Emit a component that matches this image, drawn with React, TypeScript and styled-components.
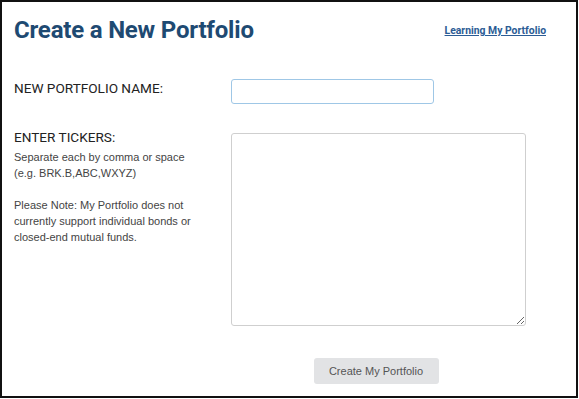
import * as React from 'react';
import styled, { createGlobalStyle } from 'styled-components';

const GlobalStyle = createGlobalStyle`
  html, body {
    margin: 0;
    padding: 0;
    background: #ffffff;
  }
`;

const Frame = styled.div`
  box-sizing: border-box;
  width: 578px;
  height: 398px;
  border: 2px solid #111;
  padding: 14px 30px 0 12px;
  background: #fff;
`;

const Header = styled.div`
  display: flex;
  justify-content: space-between;
  align-items: baseline;
`;

const Title = styled.h1`
  margin: 0;
  font-family: Roboto, 'Liberation Sans', sans-serif;
  font-weight: 700;
  font-size: 24px;
  line-height: 28px;
  color: #1e4a72;
  letter-spacing: -0.2px;
`;

const HelpLink = styled.a`
  font-family: Roboto, 'Liberation Sans', sans-serif;
  font-weight: 700;
  font-size: 10.4px;
  color: #2b5c95;
  text-decoration: underline;
  position: relative;
  top: -4px;
`;

const Form = styled.div`
  display: grid;
  grid-template-columns: 217px 294px;
  margin-top: 35px;
`;

const Label = styled.div<{ $shift?: number }>`
  margin-top: ${(p) => p.$shift ?? 0}px;
  font-family: Roboto, 'Liberation Sans', sans-serif;
  font-size: 13.6px;
  line-height: 18px;
  color: #222;
`;

const FieldCell = styled.div<{ $gap?: number }>`
  margin-bottom: ${(p) => p.$gap ?? 0}px;
`;

const NameInput = styled.input`
  box-sizing: border-box;
  display: block;
  width: 203px;
  height: 25px;
  border: 1px solid #9fc7e6;
  border-radius: 3px;
  outline: none;
`;

const TickerArea = styled.textarea`
  box-sizing: border-box;
  display: block;
  width: 295px;
  height: 193px;
  border: 1px solid #cfcfcf;
  border-radius: 3px;
  outline: none;
  resize: both;
`;

const Hint = styled.p`
  margin: 3px 0 0;
  font-family: 'Liberation Sans', Arial, sans-serif;
  font-size: 11px;
  line-height: 16px;
  color: #444;
`;

const Note = styled(Hint)`
  margin-top: 16px;
`;

const ButtonRow = styled.div`
  grid-column: 2;
  display: flex;
  justify-content: center;
  margin-top: 32px;
`;

const SubmitButton = styled.button`
  box-sizing: border-box;
  width: 125px;
  height: 26px;
  border: none;
  border-radius: 3px;
  background: #e2e3e5;
  font-family: 'Liberation Sans', Arial, sans-serif;
  font-size: 11px;
  color: #555;
  padding: 0;
  margin-left: -4px;
  cursor: pointer;
`;

export default function App() {
  return (
    <>
      <GlobalStyle />
      <Frame>
        <Header>
          <Title>Create a New Portfolio</Title>
          <HelpLink href="#">Learning My Portfolio</HelpLink>
        </Header>
        <Form>
          <Label>NEW PORTFOLIO NAME:</Label>
          <FieldCell $gap={29}>
            <NameInput type="text" />
          </FieldCell>
          <div>
            <Label $shift={-5}>ENTER TICKERS:</Label>
            <Hint>
              Separate each by comma or space
              <br />
              (e.g. BRK.B,ABC,WXYZ)
            </Hint>
            <Note>
              Please Note: My Portfolio does not
              <br />
              currently support individual bonds or
              <br />
              closed-end mutual funds.
            </Note>
          </div>
          <FieldCell>
            <TickerArea />
          </FieldCell>
          <ButtonRow>
            <SubmitButton>Create My Portfolio</SubmitButton>
          </ButtonRow>
        </Form>
      </Frame>
    </>
  );
}
